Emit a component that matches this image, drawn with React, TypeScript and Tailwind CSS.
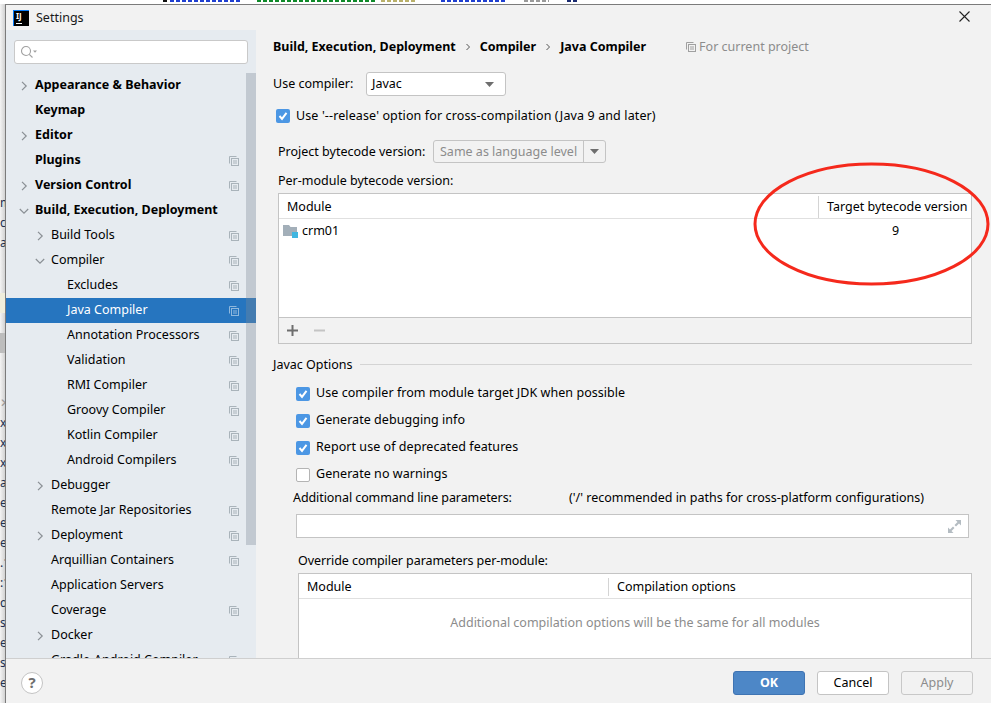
import React from 'react';

type TreeItem = {
  label: string;
  depth: 0 | 1 | 2;
  arrow?: 'right' | 'down';
  scope?: boolean;
  selected?: boolean;
};

const tree: TreeItem[] = [
  { label: 'Appearance & Behavior', depth: 0, arrow: 'right' },
  { label: 'Keymap', depth: 0 },
  { label: 'Editor', depth: 0, arrow: 'right' },
  { label: 'Plugins', depth: 0, scope: true },
  { label: 'Version Control', depth: 0, arrow: 'right', scope: true },
  { label: 'Build, Execution, Deployment', depth: 0, arrow: 'down' },
  { label: 'Build Tools', depth: 1, arrow: 'right', scope: true },
  { label: 'Compiler', depth: 1, arrow: 'down', scope: true },
  { label: 'Excludes', depth: 2, scope: true },
  { label: 'Java Compiler', depth: 2, scope: true, selected: true },
  { label: 'Annotation Processors', depth: 2, scope: true },
  { label: 'Validation', depth: 2, scope: true },
  { label: 'RMI Compiler', depth: 2, scope: true },
  { label: 'Groovy Compiler', depth: 2, scope: true },
  { label: 'Kotlin Compiler', depth: 2, scope: true },
  { label: 'Android Compilers', depth: 2, scope: true },
  { label: 'Debugger', depth: 1, arrow: 'right' },
  { label: 'Remote Jar Repositories', depth: 1, scope: true },
  { label: 'Deployment', depth: 1, arrow: 'right', scope: true },
  { label: 'Arquillian Containers', depth: 1, scope: true },
  { label: 'Application Servers', depth: 1 },
  { label: 'Coverage', depth: 1, scope: true },
  { label: 'Docker', depth: 1, arrow: 'right' },
  { label: 'Gradle-Android Compiler', depth: 1, scope: true },
];

// what shows of the window behind the dialog, one line every 20px
const behindLines = ['m', 'ck', 'al', '', '', '', '', '', '', '', '✕', 'x', 'x', 'x', 'a', 'et', 'et', 'et', '.1', ':1', 'q', 's', 'e', 's', 'e'];

// bottoms of the code line cut off above the dialog: gap before, width, colour
const behindTop: [number, number, string][] = [
  [163, 5, '#111111'],
  [2, 70, '#1f3fd0'],
  [17, 118, '#0f8a2a'],
  [6, 34, '#b9b06a'],
  [26, 66, '#1f3fd0'],
  [17, 25, '#9a9a9a'],
  [18, 10, '#1a2a70'],
];

const ScopeIcon = ({ color = '#a9b3ba' }: { color?: string }) => (
  <svg width="10" height="10" viewBox="0 0 10 10" fill="none" stroke={color} strokeWidth="1">
    <path d="M7.5 .5H.5V7.5" />
    <rect x="2.5" y="2.5" width="7" height="7" />
    <path d="M4 5H8M4 7H8" />
  </svg>
);

const Arrow = ({ dir }: { dir: 'right' | 'down' }) => (
  <svg width="10" height="10" viewBox="0 0 10 10" fill="none" stroke="#8a8f94" strokeWidth="1.2">
    {dir === 'right' ? <path d="M3 .8L7.2 5L3 9.2" /> : <path d="M.8 3L5 7.2L9.2 3" />}
  </svg>
);

const Check = ({ checked = true }: { checked?: boolean }) =>
  checked ? (
    <span className="flex h-[14px] w-[14px] shrink-0 items-center justify-center rounded-[2px] bg-[#4c97e4]">
      <svg width="10" height="10" viewBox="0 0 10 10" fill="none" stroke="#fff" strokeWidth="2">
        <path d="M1.5 5L4 7.8L8.5 1.8" />
      </svg>
    </span>
  ) : (
    <span className="h-[14px] w-[14px] shrink-0 rounded-[2px] border border-[#b4b4b4] bg-white" />
  );

const Caret = ({ color = '#6e6e6e' }: { color?: string }) => (
  <svg width="9" height="5" viewBox="0 0 9 5">
    <path d="M0 0H9L4.5 5Z" fill={color} />
  </svg>
);

const CheckRow = ({ label, checked }: { label: string; checked?: boolean }) => (
  <div className="flex h-[27px] items-center gap-[6px] pl-[23px]">
    <Check checked={checked} />
    <span className="tracking-[0.05px]">{label}</span>
  </div>
);

const BreadcrumbSep = () => (
  <svg className="mx-[9px]" width="6" height="8" viewBox="0 0 6 8" fill="none" stroke="#555" strokeWidth="1">
    <path d="M1.5 1L4.5 4L1.5 7" />
  </svg>
);

const TreeRow = ({ item }: { item: TreeItem }) => (
  <div
    className={`flex h-[25px] shrink-0 items-center ${item.selected ? 'bg-[#2675bf] text-white' : 'text-black'} ${item.depth === 0 ? 'font-bold' : ''}`}
  >
    <span className={`flex shrink-0 justify-center ${item.depth === 0 ? 'w-[29px] pl-[7px]' : item.depth === 1 ? 'w-[45px] pl-[23px]' : 'w-[61px]'}`}>
      {item.arrow && <Arrow dir={item.arrow} />}
    </span>
    <span className="flex-1 whitespace-nowrap">{item.label}</span>
    {item.scope && (
      <span className="mr-[17px] flex">
        <ScopeIcon color={item.selected ? '#8fb8dd' : '#a9b3ba'} />
      </span>
    )}
  </div>
);

const Sidebar = () => (
  <div className="relative flex w-[250px] shrink-0 flex-col overflow-hidden bg-[#e6ebf0]">
    <div className="mx-[8px] mt-[10px] mb-[9px] flex h-[24px] shrink-0 items-center rounded-[3px] border border-[#c9c9c9] bg-white pl-[5px]">
      <svg width="18" height="14" viewBox="0 0 18 14" fill="none" stroke="#a0a0a0" strokeWidth="1.1">
        <circle cx="6" cy="6" r="4.5" />
        <path d="M9.3 9.3L12.5 12.5" />
        <path d="M13 5.5H17L15 7.8Z" fill="#a0a0a0" stroke="none" />
      </svg>
    </div>
    {tree.map((item) => (
      <TreeRow key={item.label} item={item} />
    ))}
    {/* scrollbar thumb */}
    <div className="absolute top-[43px] right-0 h-[472px] w-[10px] bg-[#7f8a99]/35" />
  </div>
);

const ModuleTable = () => (
  <div className="ml-[5px] mt-[3px] flex h-[151px] shrink-0 flex-col border border-[#c4c4c4]">
    <div className="flex h-[25px] shrink-0 items-center border-b border-[#e0e0e0] bg-white pt-[2px]">
      <span className="flex-1 pl-[8px]">Module</span>
      <span className="flex h-[22px] w-[153px] items-center border-l border-[#d4d4d4] pl-[8px] whitespace-nowrap">Target bytecode version</span>
    </div>
    <div className="flex-1 bg-white">
      <div className="flex h-[24px] items-center">
        <span className="ml-[4px] mr-[4px] flex">
          <svg width="15" height="14" viewBox="0 0 15 14">
            <path d="M0 1H6L7.5 3H14V12H0Z" fill="#a3afb9" />
            <rect x="9" y="8" width="6" height="6" fill="#40b6e0" />
          </svg>
        </span>
        <span className="flex-1">crm01</span>
        <span className="w-[79px]">9</span>
      </div>
    </div>
    <div className="flex h-[26px] shrink-0 items-center gap-[16px] border-t border-[#c4c4c4] bg-[#f2f2f2] pl-[8px]">
      <svg width="11" height="11" viewBox="0 0 11 11" stroke="#6e6e6e" strokeWidth="2">
        <path d="M5.5 0V11M0 5.5H11" />
      </svg>
      <svg width="11" height="11" viewBox="0 0 11 11" stroke="#c4c4c4" strokeWidth="2">
        <path d="M0 5.5H11" />
      </svg>
    </div>
  </div>
);

const Content = () => (
  <div className="flex flex-1 flex-col overflow-hidden pl-[17px] pr-[19px] text-black">
    <div className="mt-[4px] flex h-[24px] shrink-0 items-center whitespace-nowrap pt-[2px]">
      <span className="font-bold">Build, Execution, Deployment</span>
      <BreadcrumbSep />
      <span className="font-bold">Compiler</span>
      <BreadcrumbSep />
      <span className="font-bold">Java Compiler</span>
      <span className="ml-[40px] mr-[3px] flex">
        <ScopeIcon color="#a0a0a0" />
      </span>
      <span className="text-[#8c8c8c]">For current project</span>
    </div>

    <div className="mt-[14px] flex h-[24px] shrink-0 items-center">
      <span className="w-[93px]">Use compiler:</span>
      <div className="flex h-[24px] w-[140px] items-center justify-between rounded-[3px] border border-[#c4c4c4] bg-white pl-[5px] pr-[11px]">
        <span>Javac</span>
        <Caret />
      </div>
    </div>

    <div className="mt-[9px] flex h-[22px] shrink-0 items-center gap-[6px] pl-[3px]">
      <Check />
      <span className="tracking-[0.12px]">Use '--release' option for cross-compilation (Java 9 and later)</span>
    </div>

    <div className="mt-[13px] flex h-[23px] shrink-0 items-center pl-[5px]">
      <span className="w-[155px] pt-[2px]">Project bytecode version:</span>
      <div className="flex h-[23px] w-[173px] items-center rounded-[3px] border border-[#c4c4c4] bg-[#f2f2f2]">
        <span className="flex-1 pl-[6px] pt-[2px] text-[#8c8c8c]">Same as language level</span>
        <span className="flex h-full w-[22px] items-center justify-center border-l border-[#c4c4c4]">
          <Caret />
        </span>
      </div>
    </div>

    <div className="mt-[7px] flex h-[20px] shrink-0 items-center pl-[5px] pt-[2px]">Per-module bytecode version:</div>
    <ModuleTable />

    <div className="mt-[10px] flex h-[20px] shrink-0 items-center gap-[7px]">
      <span className="pt-[2px]">Javac Options</span>
      <span className="h-px flex-1 bg-[#d4d4d4]" />
    </div>

    <div className="mt-[6px] shrink-0">
      <CheckRow label="Use compiler from module target JDK when possible" checked />
      <CheckRow label="Generate debugging info" checked />
      <CheckRow label="Report use of deprecated features" checked />
      <CheckRow label="Generate no warnings" checked={false} />
    </div>

    <div className="flex h-[20px] shrink-0 items-center whitespace-nowrap pl-[20px]">
      <span className="w-[276px] tracking-[-0.08px]">Additional command line parameters:</span>
      <span>('/' recommended in paths for cross-platform configurations)</span>
    </div>

    <div className="ml-[23px] mr-[3px] mt-[6px] flex h-[24px] shrink-0 items-center justify-end border border-[#c4c4c4] bg-white pr-[7px]">
      <svg width="13" height="13" viewBox="0 0 13 13" fill="#b4bcc2">
        <path d="M7.5 0H13V5.5L11 3.5L8 6.5L6.5 5L9.5 2Z" />
        <path d="M5.5 13H0V7.5L2 9.5L5 6.5L6.5 8L3.5 11Z" />
      </svg>
    </div>

    <div className="ml-[25px] mt-[12px] flex h-[20px] shrink-0 items-center pt-[2px] tracking-[-0.08px]">Override compiler parameters per-module:</div>

    <div className="ml-[25px] mt-[3px] flex flex-1 flex-col border-x border-t border-[#c4c4c4] bg-white">
      <div className="flex h-[25px] shrink-0 items-center border-b border-[#e0e0e0] pt-[2px]">
        <span className="w-[310px] border-r border-[#d4d4d4] pl-[8px]">Module</span>
        <span className="pl-[8px]">Compilation options</span>
      </div>
      <div className="mt-[15px] text-center text-[#8c8c8c]">Additional compilation options will be the same for all modules</div>
    </div>
  </div>
);

const Footer = () => (
  <div className="flex h-[45px] shrink-0 items-center border-t border-[#cfcfcf] bg-[#f2f2f2] pl-[15px] pr-[18px] pt-[3px]">
    <span className="flex h-[22px] w-[22px] items-center justify-center rounded-full border border-[#c4c4c4] bg-white text-[15px] font-bold text-[#6e6e6e]">?</span>
    <div className="ml-auto flex gap-[12px]">
      <button className="h-[24px] w-[72px] rounded-[3px] border border-[#3f74b3] bg-[#4d87c7] pt-[1px] font-bold text-white">OK</button>
      <button className="h-[24px] w-[72px] rounded-[3px] border border-[#c4c4c4] bg-white pt-[1px] text-black">Cancel</button>
      <button className="h-[24px] w-[72px] rounded-[3px] border border-[#c8c8c8] bg-[#f2f2f2] pt-[1px] text-[#8c8c8c]">Apply</button>
    </div>
  </div>
);

export default function App() {
  return (
    <div className="relative flex h-[703px] w-[991px] flex-col overflow-hidden bg-white font-['Noto_Sans',sans-serif] text-[12.5px]">
      {/* windows behind the dialog */}
      <div className="flex h-[4px] shrink-0 overflow-hidden bg-white">
        {behindTop.map(([gap, width, color], i) => (
          <span
            key={i}
            className="h-[2px] shrink-0"
            style={{
              marginLeft: gap,
              width,
              background: `repeating-linear-gradient(90deg, ${color} 0 4px, transparent 4px 6px)`,
            }}
          />
        ))}
      </div>
      <div className="flex min-h-0 flex-1">
        <div className="flex w-[5px] shrink-0 flex-col overflow-hidden bg-gradient-to-r from-[#f4f4f4] to-[#d2d2d2] pt-[189px] text-[12px] leading-[20px] text-[#20304f]">
          {behindLines.map((line, i) => (
            <div
              key={i}
              className={`h-[20px] shrink-0 whitespace-nowrap ${i === 5 ? 'bg-[#f0eedc]' : i === 7 ? 'bg-[#bdbdbd]' : ''} ${i === 10 ? 'text-[#9a9a9a]' : ''}`}
            >
              {line}
            </div>
          ))}
        </div>

        <div className="flex min-w-0 flex-1 flex-col border-l border-t border-[#7b7b7b] bg-[#f2f2f2]">
          <div className="flex h-[25px] shrink-0 items-center pl-[7px] pr-[21px]">
            <span className="flex h-[16px] w-[16px] flex-col border-l border-t border-[#087cfa] bg-black pl-[2px] pt-[1px] text-[8px] font-bold leading-[8px] text-white">
              IJ
              <span className="mt-[3px] h-px w-[6px] bg-white" />
            </span>
            <span className="ml-[7px] flex-1 pt-[2px] text-[#1a1a1a]">Settings</span>
            <svg className="mb-[2px]" width="11" height="11" viewBox="0 0 11 11" stroke="#222" strokeWidth="1.1">
              <path d="M.5 .5L10.5 10.5M10.5 .5L.5 10.5" />
            </svg>
          </div>
          <div className="flex min-h-0 flex-1">
            <Sidebar />
            <Content />
          </div>
          <Footer />
        </div>
      </div>

      {/* red annotation circled on the screenshot */}
      <svg className="absolute left-[750px] top-[160px]" width="241" height="128" viewBox="0 0 241 128" fill="none">
        <ellipse cx="121.5" cy="64" rx="116.5" ry="60" stroke="#f5291c" strokeWidth="3" />
      </svg>
    </div>
  );
}
